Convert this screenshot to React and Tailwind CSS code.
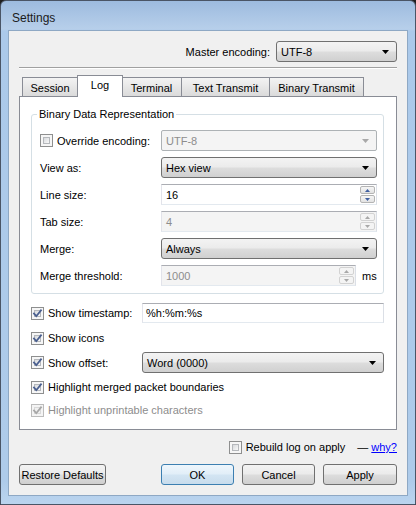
import React from 'react';

function Check({ checked = false, disabled = false }) {
  return (
    <span
      className={`relative flex h-[13px] w-[13px] shrink-0 items-center justify-center border ${
        disabled ? 'border-[#bcbcbc] bg-[#f4f4f4]' : 'border-[#8e8f8f] bg-[#f6f6f6]'
      }`}
    >
      <span
        className={`absolute inset-[2px] border ${
          disabled
            ? 'border-[#d8d8d8] bg-[#f0f0f0]'
            : 'border-[#b5b8bc] bg-[linear-gradient(135deg,#d8dadd,#f9f9f9)]'
        }`}
      />
      {checked && (
        <svg width="11" height="11" viewBox="0 0 11 11" className="relative">
          <path
            d="M2 5.6 L4.3 8.2 L9 2.3"
            fill="none"
            stroke={disabled ? '#a7a7a7' : '#4a5f8f'}
            strokeWidth="1.8"
            strokeLinecap="square"
          />
        </svg>
      )}
    </span>
  );
}

function CheckRow({ label, checked, disabled }) {
  return (
    <label className={`flex items-center gap-[4px] ${disabled ? 'text-[#8d8d8d]' : 'text-black'}`}>
      <Check checked={checked} disabled={disabled} />
      <span>{label}</span>
    </label>
  );
}

function Arrow({ color = '#000' }) {
  return (
    <svg width="7" height="4" viewBox="0 0 7 4">
      <polygon points="0,0 7,0 3.5,4" fill={color} />
    </svg>
  );
}

function Combo({ value, disabled = false, className = '' }) {
  if (disabled) {
    return (
      <div
        className={`flex h-[21px] items-center justify-between rounded-[2px] border border-[#adb2b5] bg-[#f4f4f4] pl-[4px] pr-[7px] text-[#8d8d8d] ${className}`}
      >
        <span>{value}</span>
        <Arrow color="#a8a8a8" />
      </div>
    );
  }
  return (
    <div
      className={`flex h-[21px] items-center justify-between rounded-[3px] border border-[#707070] bg-[linear-gradient(#f3f3f3_0%,#ebebeb_48%,#dddddd_52%,#d0d0d0_100%)] pl-[4px] pr-[7px] text-black ${className}`}
    >
      <span>{value}</span>
      <Arrow />
    </div>
  );
}

function SpinArrow({ up, color }) {
  return (
    <svg width="5" height="3" viewBox="0 0 5 3">
      <polygon points={up ? '0,3 5,3 2.5,0' : '0,0 5,0 2.5,3'} fill={color} />
    </svg>
  );
}

function Spin({ value, disabled = false, className = '' }) {
  const arrow = disabled ? '#a8a8a8' : '#3f5fa0';
  return (
    <div
      className={`flex h-[21px] items-center justify-between border border-[#abadb3] border-b-[#e3e9ef] border-l-[#e2e3ea] border-r-[#dbdfe6] pl-[4px] pr-[1px] ${
        disabled ? 'bg-[#f4f4f4] text-[#8d8d8d]' : 'bg-white text-black'
      } ${className}`}
    >
      <span>{value}</span>
      <div className="flex flex-col gap-[1px]">
        <span
          className={`flex h-[8px] w-[15px] items-center justify-center rounded-[2px] border ${
            disabled ? 'border-[#d2d2d2] bg-[#f4f4f4]' : 'border-[#b4b4b4] bg-[linear-gradient(#f6f6f6,#e2e2e2)]'
          }`}
        >
          <SpinArrow up color={arrow} />
        </span>
        <span
          className={`flex h-[8px] w-[15px] items-center justify-center rounded-[2px] border ${
            disabled ? 'border-[#d2d2d2] bg-[#f4f4f4]' : 'border-[#b4b4b4] bg-[linear-gradient(#f6f6f6,#e2e2e2)]'
          }`}
        >
          <SpinArrow color={arrow} />
        </span>
      </div>
    </div>
  );
}

function Button({ children, primary = false, className = '' }) {
  return (
    <button
      className={`flex h-[21px] items-center justify-center rounded-[3px] border text-black ${
        primary
          ? 'border-[#3c7fb1] bg-[linear-gradient(#eef6fc_0%,#e1eef8_48%,#d3e5f3_52%,#c8dcec_100%)]'
          : 'border-[#707070] bg-[linear-gradient(#f3f3f3_0%,#ebebeb_48%,#dddddd_52%,#cfcfcf_100%)]'
      } ${className}`}
    >
      {children}
    </button>
  );
}

const tabs = [
  { name: 'Session', w: 'w-[56px]' },
  { name: 'Log', w: 'w-[46px]', active: true },
  { name: 'Terminal', w: 'w-[61px]' },
  { name: 'Text Transmit', w: 'w-[89px]' },
  { name: 'Binary Transmit', w: 'w-[95px]' },
];

export default function App() {
  return (
    <div className="h-[505px] w-[416px] bg-[#1f1f1f] font-['Liberation_Sans',Arial,sans-serif] text-[11px] leading-[14px]">
      <div className="flex h-[505px] w-[416px] flex-col rounded-t-[6px] border border-[#4a5566] bg-[linear-gradient(#9dbbdf_0px,#b7cfea_28px,#abc9ea_30px,#aecbea_480px,#bcd5ef_505px)]">
        <div className="flex h-[29px] items-start pl-[11px] pt-[10px] text-[12px] text-[#1b1b1b]">
          Settings
        </div>
        <div className="mx-[7px] flex h-[466px] flex-col border border-[#8ea8c4] bg-[#f0f0f0] px-[10px] pt-[10px]">
          <div className="flex items-center justify-end gap-[6px]">
            <span>Master encoding:</span>
            <Combo value="UTF-8" className="w-[121px]" />
          </div>

          <div className="mt-[5px] border-t border-b border-t-[#a0a0a0] border-b-white" />

          <div className="mt-[7px] flex h-[20px] items-end pl-[3px]">
            {tabs.map((t) =>
              t.active ? (
                <div
                  key={t.name}
                  className={`relative z-10 -mx-[1px] mb-[-1px] flex h-[22px] items-center justify-center border border-b-0 border-[#898c95] bg-white pb-[3px] ${t.w}`}
                >
                  {t.name}
                </div>
              ) : (
                <div
                  key={t.name}
                  className={`-ml-[1px] flex h-[19px] items-center justify-center border border-b-0 border-[#898c95] bg-[linear-gradient(#f3f3f3,#e7e7e7_50%,#dadada)] pt-[2px] first:ml-0 ${t.w}`}
                >
                  {t.name}
                </div>
              )
            )}
          </div>

          <div className="flex h-[334px] flex-col border border-[#898c95] bg-white pl-[11px] pr-[12px]">
            <div className="relative mt-[17px] rounded-[3px] border border-[#d5dfe5] pb-[7px] pl-[8px] pr-[11px] pt-[15px]">
              <span className="absolute -top-[8px] left-[5px] bg-white px-[2px]">Binary Data Representation</span>
              <div className="grid grid-cols-[121px_1fr] items-center gap-y-[6px]">
                <CheckRow label="Override encoding:" />
                <Combo value="UTF-8" disabled />

                <span>View as:</span>
                <Combo value="Hex view" />

                <span>Line size:</span>
                <Spin value="16" />

                <span>Tab size:</span>
                <Spin value="4" disabled />

                <span>Merge:</span>
                <Combo value="Always" />

                <span>Merge threshold:</span>
                <div className="flex items-center gap-[6px]">
                  <Spin value="1000" disabled className="w-[195px]" />
                  <span>ms</span>
                </div>
              </div>
            </div>

            <div className="mt-[9px] grid grid-cols-[111px_1fr] items-center">
              <CheckRow label="Show timestamp:" checked />
              <div className="flex h-[20px] items-center border border-[#abadb3] border-b-[#e3e9ef] border-l-[#e2e3ea] border-r-[#dbdfe6] bg-white pl-[3px]">
                %h:%m:%s
              </div>
            </div>

            <div className="mt-[7px] flex h-[16px] items-center">
              <CheckRow label="Show icons" checked />
            </div>

            <div className="mt-[6px] grid grid-cols-[111px_1fr] items-center">
              <CheckRow label="Show offset:" checked />
              <Combo value="Word (0000)" className="h-[20px]" />
            </div>

            <div className="mt-[6px] flex h-[16px] items-center">
              <CheckRow label="Highlight merged packet boundaries" checked />
            </div>

            <div className="mt-[7px] flex h-[16px] items-center">
              <CheckRow label="Highlight unprintable characters" checked disabled />
            </div>
          </div>

          <div className="mt-[9px] flex h-[16px] items-center justify-end">
            <CheckRow label="Rebuild log on apply" />
            <span className="ml-[12px]">—</span>
            <a href="#" className="ml-[3px] text-[#0000ff] underline">
              why?
            </a>
          </div>

          <div className="mt-[9px] flex items-center justify-between">
            <Button className="w-[87px]">Restore Defaults</Button>
            <div className="flex gap-[8px]">
              <Button primary className="w-[73px]">
                OK
              </Button>
              <Button className="w-[73px]">Cancel</Button>
              <Button className="w-[74px]">Apply</Button>
            </div>
          </div>
        </div>
      </div>
    </div>
  );
}
